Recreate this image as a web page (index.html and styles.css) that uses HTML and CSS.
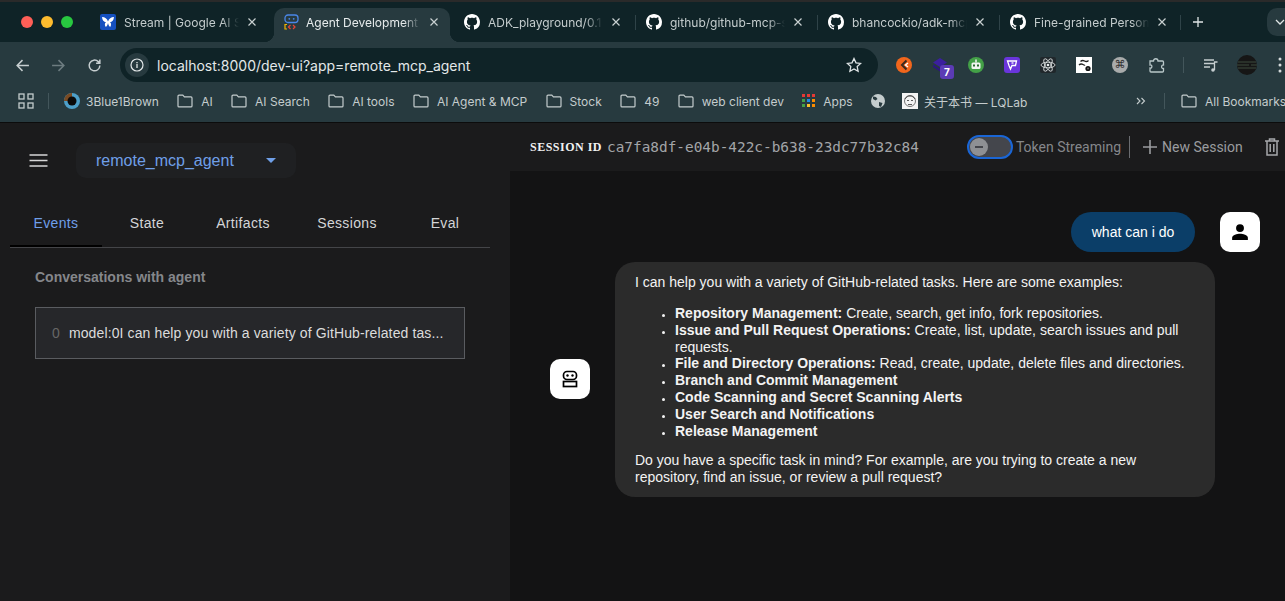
FILE: index.html

```html
<!doctype html>
<html>
<head>
    <title>Agent Development Kit Dev UI</title>
    <link rel="stylesheet" href="styles.css">
    <meta name="viewport" content="width=device-width, initial-scale=1.0">
</head>
<body>
    <svg class="defs" width="0" height="0">
        <symbol id="octo" viewBox="0 0 16 16"><path d="M8 0C3.58 0 0 3.58 0 8c0 3.54 2.29 6.53 5.47 7.59.4.07.55-.17.55-.38 0-.19-.01-.82-.01-1.49-2.01.37-2.53-.49-2.69-.94-.09-.23-.48-.94-.82-1.13-.28-.15-.68-.52-.01-.53.63-.01 1.08.58 1.23.82.72 1.21 1.87.87 2.33.66.07-.52.28-.87.51-1.07-1.78-.2-3.64-.89-3.64-3.95 0-.87.31-1.59.82-2.15-.08-.2-.36-1.02.08-2.12 0 0 .67-.21 2.2.82.64-.18 1.32-.27 2-.27.68 0 1.36.09 2 .27 1.53-1.04 2.2-.82 2.2-.82.44 1.1.16 1.92.08 2.12.51.56.82 1.27.82 2.15 0 3.07-1.87 3.75-3.65 3.95.29.25.54.73.54 1.48 0 1.07-.01 1.93-.01 2.2 0 .21.15.46.55.38A8.013 8.013 0 0016 8c0-4.42-3.58-8-8-8z" fill="#fff"/></symbol>
        <symbol id="folder" viewBox="0 0 16 14"><path d="M1 2.2c0-.6.4-1 1-1h3.8l1.6 1.7H14c.6 0 1 .4 1 1v8c0 .6-.4 1-1 1H2c-.6 0-1-.4-1-1z" fill="none" stroke="#c4cccd" stroke-width="1.2"/></symbol>
        <symbol id="close" viewBox="0 0 10 10"><path d="M1.5 1.5l7 7M8.5 1.5l-7 7" stroke="#c9d1d2" stroke-width="1.2" fill="none"/></symbol>
    </svg>

    <div class="browser">
        <div class="tabstrip">
            <div class="lights">
                <span class="light red"></span>
                <span class="light yellow"></span>
                <span class="light green"></span>
            </div>
            <div class="tab">
                <svg class="fav" viewBox="0 0 16 16"><rect width="16" height="16" rx="2" fill="#1550c0"/><path d="M8 7.500C7 4.500 5 3 2 3c.3 3.500 1.800 5 4 5.300C4.800 9 4.300 11 5.800 13 7 12 7.800 10.500 8 9c.2 1.500 1 3 2.200 4 1.500-2 1-4-.2-4.700 2.200-.3 3.700-1.800 4-5.300-3 0-5 1.500-6 4.500z" fill="#fff"/></svg>
                <span class="tab-title">Stream | Google AI Studio</span>
                <svg class="tab-x" viewBox="0 0 10 10"><use href="#close"/></svg>
            </div>
            <div class="tab active">
                <svg class="fav" viewBox="0 0 16 16"><rect x="1" y="1" width="13" height="7.500" rx="3" fill="none" stroke="#4a86e8" stroke-width="1.300"/><circle cx="5.300" cy="4.800" r=".9" fill="#4a86e8"/><circle cx="9.700" cy="4.800" r=".9" fill="#4a86e8"/><path d="M3 10.500H1v4.500h2" fill="none" stroke="#f4b400" stroke-width="1.200"/><path d="M6.500 11l-2 2 2 2" fill="none" stroke="#ea4335" stroke-width="1.200"/><path d="M9 11l2 2-2 2" fill="none" stroke="#ea4335" stroke-width="1.200"/></svg>
                <span class="tab-title">Agent Development Kit</span>
                <svg class="tab-x" viewBox="0 0 10 10"><use href="#close"/></svg>
            </div>
            <div class="tab">
                <svg class="fav" viewBox="0 0 16 16"><use href="#octo"/></svg>
                <span class="tab-title">ADK_playground/0.1</span>
                <svg class="tab-x" viewBox="0 0 10 10"><use href="#close"/></svg>
            </div>
            <div class="tab sep">
                <svg class="fav" viewBox="0 0 16 16"><use href="#octo"/></svg>
                <span class="tab-title">github/github-mcp-server</span>
                <svg class="tab-x" viewBox="0 0 10 10"><use href="#close"/></svg>
            </div>
            <div class="tab sep">
                <svg class="fav" viewBox="0 0 16 16"><use href="#octo"/></svg>
                <span class="tab-title">bhancockio/adk-mcp-server</span>
                <svg class="tab-x" viewBox="0 0 10 10"><use href="#close"/></svg>
            </div>
            <div class="tab sep">
                <svg class="fav" viewBox="0 0 16 16"><use href="#octo"/></svg>
                <span class="tab-title">Fine-grained Personal access</span>
                <svg class="tab-x" viewBox="0 0 10 10"><use href="#close"/></svg>
            </div>
            <div class="tab-end"></div>
            <svg class="new-tab" viewBox="0 0 12 12"><path d="M6 1v10M1 6h10" stroke="#dfe5e6" stroke-width="1.300" fill="none"/></svg>
            <div class="tab-search"><svg viewBox="0 0 10 6" width="10" height="6"><path d="M1 1l4 4 4-4" stroke="#dfe5e6" stroke-width="1.300" fill="none"/></svg></div>
        </div>

        <div class="toolbar">
            <svg class="nav" viewBox="0 0 14 14"><path d="M13 7H2M7 2L2 7l5 5" stroke="#c6ced0" stroke-width="1.400" fill="none"/></svg>
            <svg class="nav" viewBox="0 0 14 14"><path d="M1 7h11M7 2l5 5-5 5" stroke="#6d7c80" stroke-width="1.400" fill="none"/></svg>
            <svg class="nav" viewBox="0 0 14 14"><path d="M12 7a5 5 0 1 1-1.500-3.600L12 5M12 1.500V5H8.500" stroke="#c6ced0" stroke-width="1.400" fill="none"/></svg>
            <div class="omnibox">
                <span class="info-chip"><svg viewBox="0 0 14 14" width="14" height="14"><circle cx="7" cy="7" r="6" fill="none" stroke="#e3e8e9" stroke-width="1.200"/><path d="M7 6v4M7 4v1.200" stroke="#e3e8e9" stroke-width="1.300"/></svg></span>
                <span class="url">localhost:8000/dev-ui?app=remote_mcp_agent</span>
                <svg class="star" viewBox="0 0 16 16"><path d="M8 1.500l2 4.300 4.700.6-3.500 3.200.9 4.700L8 12l-4.100 2.300.9-4.700-3.500-3.200 4.700-.6z" fill="none" stroke="#dfe5e6" stroke-width="1.300"/></svg>
            </div>
            <div class="extensions">
                <svg class="ext" viewBox="0 0 16 16"><circle cx="8" cy="8" r="8" fill="#f2661c"/><path d="M10.500 3.500L6 8l4.500 4.500" fill="none" stroke="#3a2a20" stroke-width="2"/><path d="M12 6l-2.500 2 2.500 2" fill="none" stroke="#fff" stroke-width="1.400"/></svg>
                <span class="ext-badge-wrap">
                    <svg class="ext" viewBox="0 0 16 16"><path d="M8 1l7 4.500-7 4.500-7-4.500z" fill="#3b1f9e"/><path d="M1 7.500l7 4.500 7-4.500V10l-7 4.500L1 10z" fill="#2c1680"/></svg>
                    <span class="ext-badge">7</span>
                </span>
                <svg class="ext" viewBox="0 0 16 16"><circle cx="8" cy="8" r="8" fill="#43a047"/><rect x="3.500" y="5.500" width="9" height="6.500" rx="1.500" fill="#f1f5f1"/><rect x="5" y="7.500" width="2" height="2" fill="#2b6b30"/><rect x="9" y="7.500" width="2" height="2" fill="#2b6b30"/><path d="M8 5.500V2.500" stroke="#f1f5f1" stroke-width="1.500"/></svg>
                <svg class="ext" viewBox="0 0 16 16"><rect width="16" height="16" rx="3" fill="#6a35dc"/><path d="M3.500 4h9l-1 4.500H8L6.500 12 5 8.500z" fill="none" stroke="#fff" stroke-width="1.300"/><path d="M7.500 6h2" stroke="#fff" stroke-width="1.300"/></svg>
                <svg class="ext" viewBox="0 0 16 16"><rect width="16" height="16" rx="2" fill="#20272b"/><g fill="none" stroke="#e8ecec" stroke-width=".8"><ellipse cx="8" cy="8" rx="7" ry="2.800"/><ellipse cx="8" cy="8" rx="7" ry="2.800" transform="rotate(60 8 8)"/><ellipse cx="8" cy="8" rx="7" ry="2.800" transform="rotate(120 8 8)"/></g><circle cx="8" cy="8" r="1.300" fill="#e8ecec"/></svg>
                <svg class="ext" viewBox="0 0 16 16"><rect width="16" height="16" fill="#fff"/><path d="M4.500 4.500C6 3 7 3 8.500 4s2.500 1 4-.5M3 8c1.500-1.500 2.500-1.500 4-.5S8.500 8.300 9 8" fill="none" stroke="#222" stroke-width="1.400"/><circle cx="12" cy="11.500" r="2.600" fill="#111"/><circle cx="12" cy="11.500" r=".9" fill="#777"/></svg>
                <span class="ext ext-cmd">⌘</span>
                <svg class="ext puzzle" viewBox="0 0 16 16"><path d="M1 4h3.500C4.500 1 9 1 9 4h4.500c.5 0 1 .5 1 1v3c-2.500-.5-2.500 4 0 3.500V14c0 .5-.5 1-1 1H2c-.5 0-1-.5-1-1v-3c2.500.5 2.500-3.500 0-3z" fill="none" stroke="#b9c7c9" stroke-width="1.300"/></svg>
            </div>
            <span class="tool-sep"></span>
            <svg class="ext music" viewBox="0 0 16 16"><path d="M1 3h10M1 6.500h10M1 10h6" stroke="#c6ced0" stroke-width="1.300" fill="none"/><path d="M11.500 13V5h3" stroke="#c6ced0" stroke-width="1.300" fill="none"/><circle cx="10" cy="13" r="1.800" fill="#c6ced0"/></svg>
            <svg class="avatar" viewBox="0 0 20 20"><circle cx="10" cy="10" r="10" fill="#161616"/><path d="M1 7h18M0 10h12M14 10h6M1 13h18" stroke="#3d4a3d" stroke-width="1.100"/></svg>
            <svg class="dots" viewBox="0 0 4 16"><circle cx="2" cy="2" r="1.500" fill="#d4dadb"/><circle cx="2" cy="8" r="1.500" fill="#d4dadb"/><circle cx="2" cy="14" r="1.500" fill="#d4dadb"/></svg>
        </div>

        <div class="bookmarks">
            <svg class="grid-icon" viewBox="0 0 16 16"><g fill="none" stroke="#c4cccd" stroke-width="1.300"><rect x="1" y="1" width="5" height="5"/><rect x="10" y="1" width="5" height="5"/><rect x="1" y="10" width="5" height="5"/><rect x="10" y="10" width="5" height="5"/></g></svg>
            <span class="bm-sep"></span>
            <span class="bm tight"><svg class="bm-icon" viewBox="0 0 16 16"><circle cx="8" cy="8" r="8" fill="#4d9fc9"/><path d="M8 0A8 8 0 0 0 0 8h8z" fill="#7a4a22"/><circle cx="8" cy="8" r="4.500" fill="#0a0a0a"/></svg>3Blue1Brown</span>
            <span class="bm"><svg class="bm-icon" viewBox="0 0 16 14"><use href="#folder"/></svg>AI</span>
            <span class="bm"><svg class="bm-icon" viewBox="0 0 16 14"><use href="#folder"/></svg>AI Search</span>
            <span class="bm"><svg class="bm-icon" viewBox="0 0 16 14"><use href="#folder"/></svg>AI tools</span>
            <span class="bm"><svg class="bm-icon" viewBox="0 0 16 14"><use href="#folder"/></svg>AI Agent &amp; MCP</span>
            <span class="bm"><svg class="bm-icon" viewBox="0 0 16 14"><use href="#folder"/></svg>Stock</span>
            <span class="bm"><svg class="bm-icon" viewBox="0 0 16 14"><use href="#folder"/></svg>49</span>
            <span class="bm"><svg class="bm-icon" viewBox="0 0 16 14"><use href="#folder"/></svg>web client dev</span>
            <span class="bm"><svg class="bm-icon apps" viewBox="0 0 13 14"><g fill="#e53935"><rect width="3" height="3"/><rect x="5" width="3" height="3"/><rect x="10" width="3" height="3"/></g><g fill="#1e88e5"><rect y="5" width="3" height="3" fill="#43a047"/><rect x="5" y="5" width="3" height="3"/><rect x="10" y="5" width="3" height="3" fill="#fb8c00"/></g><g fill="#43a047"><rect y="10" width="3" height="3"/><rect x="5" y="10" width="3" height="3" fill="#fbc02d"/><rect x="10" y="10" width="3" height="3" fill="#fb8c00"/></g></svg>Apps</span>
            <svg class="bm-icon globe" viewBox="0 0 16 16"><circle cx="8" cy="8" r="7" fill="#c4cccd"/><path d="M3 3.500l3 .5 1.500 2-2 1.500L3 6zM9 9l3.500 1-1.500 4-2-1z" fill="#283a3f"/></svg>
            <span class="bm tight"><svg class="bm-icon" viewBox="0 0 16 16"><rect width="16" height="16" fill="#f4f4f4"/><circle cx="8" cy="8" r="5.500" fill="none" stroke="#555" stroke-width=".8"/><path d="M3 6c2-4 8-4 10 0M5 7.500h2M9 7.500h2M6 11.500h4" stroke="#333" stroke-width=".8" fill="none"/></svg><span class="cjk">关于本书 — LQLab</span></span>
            <span class="bm-spacer"></span>
            <svg class="more" viewBox="0 0 10 8"><path d="M1 1l3 3-3 3M5.500 1l3 3-3 3" stroke="#c4cccd" stroke-width="1.100" fill="none"/></svg>
            <span class="bm-sep"></span>
            <span class="bm all"><svg class="bm-icon" viewBox="0 0 16 14"><use href="#folder"/></svg>All Bookmarks</span>
        </div>
    </div>

    <div class="app">
        <aside class="sidebar">
            <div class="side-top">
                <svg class="menu" viewBox="0 0 18 13"><path d="M0 1h18M0 6.500h18M0 12h18" stroke="#d6d6d6" stroke-width="1.500"/></svg>
                <div class="agent-select">
                    <span>remote_mcp_agent</span>
                    <svg class="caret" viewBox="0 0 10 5"><path d="M0 0h10L5 5z" fill="#6f9fe8"/></svg>
                </div>
            </div>
            <div class="side-tabs">
                <span class="side-tab on">Events</span>
                <span class="side-tab">State</span>
                <span class="side-tab">Artifacts</span>
                <span class="side-tab">Sessions</span>
                <span class="side-tab">Eval</span>
            </div>
            <div class="events">
                <div class="events-title">Conversations with agent</div>
                <div class="event-card">
                    <span class="event-num">0</span>
                    <span class="event-text">model:0I can help you with a variety of GitHub-related tas...</span>
                </div>
            </div>
        </aside>

        <main class="chat">
            <header class="chat-head">
                <span class="session-label">SESSION ID</span>
                <span class="session-id">ca7fa8df-e04b-422c-b638-23dc77b32c84</span>
                <span class="toggle"><span class="thumb"></span></span>
                <span class="toggle-label">Token Streaming</span>
                <span class="head-sep"></span>
                <svg class="plus" viewBox="0 0 14 14"><path d="M7 0v14M0 7h14" stroke="#9a9c9f" stroke-width="1.600"/></svg>
                <span class="new-session">New Session</span>
                <svg class="trash" viewBox="0 0 14 18"><path d="M0 3h14M4.500 3V1h5v2M2 3v14h10V3M5.200 6v8M8.800 6v8" fill="none" stroke="#a6a8ab" stroke-width="1.500"/></svg>
            </header>

            <div class="messages">
                <div class="row user">
                    <div class="bubble-user">what can i do</div>
                    <div class="face">
                        <svg viewBox="0 0 16 16" width="18" height="18"><circle cx="8" cy="4.500" r="3.500"/><path d="M1 15v-2c0-2.500 4.500-3.500 7-3.500s7 1 7 3.500v2z"/></svg>
                    </div>
                </div>
                <div class="row bot">
                    <div class="face">
                        <svg viewBox="0 0 18 18" width="18" height="18"><rect x="2.500" y="1.500" width="13" height="8" rx="3.500" fill="none" stroke="#000" stroke-width="1.700"/><circle cx="6.500" cy="5.500" r="1.200"/><circle cx="11.500" cy="5.500" r="1.200"/><rect x="2.500" y="11.500" width="13" height="5" fill="none" stroke="#000" stroke-width="1.700"/></svg>
                    </div>
                    <div class="bubble-bot">
                        <p>I can help you with a variety of GitHub-related tasks. Here are some examples:</p>
                        <ul>
                            <li><b>Repository Management:</b> Create, search, get info, fork repositories.</li>
                            <li><b>Issue and Pull Request Operations:</b> Create, list, update, search issues and pull requests.</li>
                            <li><b>File and Directory Operations:</b> Read, create, update, delete files and directories.</li>
                            <li><b>Branch and Commit Management</b></li>
                            <li><b>Code Scanning and Secret Scanning Alerts</b></li>
                            <li><b>User Search and Notifications</b></li>
                            <li><b>Release Management</b></li>
                        </ul>
                        <p>Do you have a specific task in mind? For example, are you trying to create a new repository, find an issue, or review a pull request?</p>
                    </div>
                </div>
            </div>
        </main>
    </div>
</body>
</html>
```

FILE: styles.css

```css
* {
    box-sizing: border-box;
}
html, body {
    height: 100%;
}
body {
    margin: 0;
    background-color: #131314;
    font-family: "Liberation Sans", Arial, sans-serif;
    overflow: hidden;
    display: flex;
    flex-direction: column;
}
.defs {
    display: block;
    height: 0;
}

/* browser chrome */
.browser {
    border-top: 2px solid #2a2a2a;
    background-color: #0f2327;
    font-family: Inter, "Liberation Sans", sans-serif;
}
.tabstrip {
    height: 40px;
    display: flex;
    align-items: flex-end;
    padding-top: 6px;
    font-size: 12px;
}
.lights {
    width: 92px;
    height: 34px;
    padding: 8px 0 0 21px;
    display: flex;
    gap: 8px;
    flex: none;
}
.light {
    width: 12px;
    height: 12px;
    border-radius: 50%;
}
.red { background-color: #ff5f57; }
.yellow { background-color: #febc2e; }
.green { background-color: #28c840; }

.tab {
    width: 182px;
    height: 34px;
    padding: 0 0 6px 8px;
    display: flex;
    align-items: center;
    color: #c4cccd;
    position: relative;
    flex: none;
}
.tab.active {
    width: 176px;
    margin-right: 6px;
    background-color: #273a3f;
    color: #e6ebec;
    border-radius: 10px 10px 0 0;
    padding-left: 10px;
}
.tab.active .tab-title {
    margin-left: 6px;
}
.tab.active::before, .tab.active::after {
    content: "";
    position: absolute;
    bottom: 0;
    width: 10px;
    height: 10px;
}
.tab.active::before {
    left: -10px;
    background: radial-gradient(circle at 0 0, transparent 10px, #273a3f 10.500px);
}
.tab.active::after {
    right: -10px;
    background: radial-gradient(circle at 100% 0, transparent 10px, #273a3f 10.500px);
}
.tab.sep::before {
    content: "";
    position: absolute;
    left: -3px;
    top: 7px;
    height: 15px;
    width: 1px;
    background-color: #2f4348;
}
.fav {
    width: 16px;
    height: 16px;
    flex: none;
}
.tab-title {
    margin-left: 8px;
    width: 115px;
    flex: none;
    overflow: hidden;
    white-space: nowrap;
    -webkit-mask-image: linear-gradient(to right, #000 85%, transparent);
    mask-image: linear-gradient(to right, #000 85%, transparent);
}
.tab-x {
    width: 10px;
    height: 10px;
    margin-left: 8px;
    flex: none;
}
.tab-end {
    width: 1px;
    height: 15px;
    margin: 0 0 12px -4px;
    background-color: #2f4348;
    flex: none;
}
.new-tab {
    width: 12px;
    height: 12px;
    margin: 0 0 14px 11px;
    flex: none;
}
.tab-search {
    width: 40px;
    height: 28px;
    margin: 0 0 6px 63px;
    border-radius: 10px;
    background-color: #273a3f;
    display: flex;
    align-items: center;
    padding-left: 8px;
    flex: none;
}

.toolbar {
    height: 46px;
    background-color: #273a3f;
    display: flex;
    align-items: center;
    padding: 0 0 0 15px;
}
.nav {
    width: 15px;
    height: 15px;
    margin-right: 21px;
    flex: none;
}
.omnibox {
    width: 758px;
    height: 34px;
    margin-left: -3px;
    border-radius: 17px;
    background-color: #0f2327;
    display: flex;
    align-items: center;
    padding: 0 16px 0 5px;
    flex: none;
}
.info-chip {
    width: 24px;
    height: 24px;
    border-radius: 50%;
    background-color: #273a3f;
    display: flex;
    align-items: center;
    justify-content: center;
}
.url {
    margin-left: 8px;
    color: #e3e8e9;
    font-size: 14px;
    flex: 1;
}
.star {
    width: 16px;
    height: 16px;
}
.extensions {
    display: flex;
    align-items: center;
    gap: 20px;
    margin-left: 18px;
}
.ext {
    width: 16px;
    height: 16px;
    flex: none;
    display: block;
}
.puzzle {
    margin-left: 1px;
}
.ext-badge-wrap {
    position: relative;
    display: block;
}
.ext-badge {
    position: absolute;
    left: 8px;
    top: 8px;
    width: 14px;
    height: 14px;
    border-radius: 3px;
    background-color: #5b3bb5;
    color: #fff;
    font-size: 10px;
    font-weight: bold;
    text-align: center;
    line-height: 14px;
}
.ext-cmd {
    border-radius: 50%;
    background-color: #a9abab;
    color: #333;
    font-size: 11px;
    line-height: 16px;
    text-align: center;
    font-family: "DejaVu Sans", sans-serif;
}
.tool-sep {
    width: 1px;
    height: 16px;
    margin: 0 19px 0 18px;
    background-color: #43565b;
    flex: none;
}
.music {
    margin-right: 18px;
}
.avatar {
    width: 20px;
    height: 20px;
    flex: none;
}
.dots {
    width: 4px;
    height: 16px;
    margin-left: 21px;
    flex: none;
}

.bookmarks {
    height: 35px;
    padding: 0 0 8px 18px;
    background-color: #273a3f;
    border-bottom: 1px solid #0c0c0c;
    display: flex;
    align-items: center;
    font-size: 12px;
    color: #c4cccd;
    white-space: nowrap;
}
.grid-icon {
    width: 16px;
    height: 16px;
    flex: none;
}
.bm-sep {
    width: 1px;
    height: 16px;
    margin: 0 15px 0 14px;
    background-color: #43565b;
    flex: none;
}
.bm {
    display: flex;
    align-items: center;
    gap: 8px;
    margin-right: 18.400px;
    flex: none;
}
.bm.tight {
    gap: 6px;
}
.cjk {
    font-family: Inter, "Noto Sans CJK SC", sans-serif;
}
.bm-icon {
    width: 16px;
    height: 16px;
    flex: none;
}
.apps {
    width: 13px;
}
.globe {
    margin: 0 16px 0 -1px;
}
.bm-spacer {
    flex: 1;
}
.more {
    width: 10px;
    height: 8px;
    margin-right: 4px;
    flex: none;
}
.all {
    width: 104px;
    margin-right: 0;
    margin-left: 1px;
    overflow: hidden;
}

/* dev ui */
.app {
    flex: 1;
    display: flex;
    min-height: 0;
}
.sidebar {
    width: 510px;
    flex: none;
    background-color: #1b1b1c;
}
.side-top {
    display: flex;
    align-items: center;
    padding: 20px 0 0 29px;
}
.menu {
    width: 19px;
    height: 13px;
}
.agent-select {
    width: 220px;
    height: 35px;
    margin-left: 28px;
    padding: 0 20px;
    border-radius: 10px;
    background-color: #1f2022;
    color: #6f9fe8;
    font-size: 16px;
    display: flex;
    align-items: center;
    justify-content: space-between;
}
.caret {
    width: 10px;
    height: 5px;
}
.side-tabs {
    margin: 25px 20px 0 10px;
    display: grid;
    grid-template-columns: 92px 90px 102px 106px 90px;
    border-bottom: 1px solid #444548;
    font-size: 14px;
    letter-spacing: .35px;
}
.side-tab {
    height: 44px;
    line-height: 40px;
    text-align: center;
    color: #d4d5d7;
}
.side-tab.on {
    color: #6f9fe8;
    border-bottom: 2px solid #000;
    margin-bottom: -1px;
}
.events {
    padding: 21px 45px 0 35px;
}
.events-title {
    color: #85878b;
    font-size: 14px;
    font-weight: bold;
    line-height: 16px;
}
.event-card {
    height: 52px;
    margin-top: 22px;
    padding: 0 16px;
    display: flex;
    align-items: center;
    gap: 9px;
    background-color: #26272a;
    border: 1px solid #5a5c60;
    font-size: 14px;
    letter-spacing: .12px;
    color: #dcdcdc;
    white-space: nowrap;
    overflow: hidden;
}
.event-num {
    color: #666;
}

.chat {
    flex: 1;
    min-width: 0;
}
.chat-head {
    height: 48px;
    padding-left: 20px;
    background-color: #1b1b1c;
    display: flex;
    align-items: center;
    white-space: nowrap;
}
.session-label {
    font-family: "Liberation Serif", serif;
    font-size: 12px;
    font-weight: bold;
    letter-spacing: .5px;
    color: #f1f1f1;
}
.session-id {
    margin-left: 5px;
    font-family: "DejaVu Sans Mono", monospace;
    font-size: 14.400px;
    color: #a3a5a8;
}
.toggle {
    width: 46px;
    height: 24px;
    margin-left: 48px;
    border: 2px solid #1a66d6;
    border-radius: 12px;
    background-color: #44464c;
    display: flex;
    align-items: center;
    padding-left: 1px;
    flex: none;
}
.thumb {
    width: 18px;
    height: 18px;
    border-radius: 50%;
    background-color: #8e9094;
    display: flex;
    align-items: center;
    justify-content: center;
}
.thumb::after {
    content: "";
    width: 8px;
    height: 2px;
    background-color: #44464c;
}
.toggle-label {
    margin-left: 3px;
    color: #85878b;
    font-family: Roboto, sans-serif;
    font-size: 14px;
}
.head-sep {
    width: 1px;
    height: 22px;
    margin: 0 13px 0 8px;
    background-color: #6a6c70;
}
.plus {
    width: 14px;
    height: 14px;
    flex: none;
}
.new-session {
    margin-left: 5px;
    color: #9a9c9f;
    font-family: Roboto, sans-serif;
    font-size: 14px;
}
.trash {
    width: 14px;
    height: 18px;
    margin-left: 22px;
    flex: none;
}

.messages {
    padding-top: 41px;
}
.row {
    display: flex;
    gap: 25px;
    margin-bottom: 10px;
}
.row.user {
    justify-content: flex-end;
    padding-right: 25px;
}
.row.bot {
    align-items: center;
    padding-left: 40px;
}
.bubble-user {
    width: 124px;
    height: 40px;
    border-radius: 20px;
    background-color: #0b3e68;
    color: #fff;
    font-size: 14px;
    line-height: 40px;
    text-align: center;
}
.face {
    width: 40px;
    height: 40px;
    border-radius: 10px;
    background-color: #fff;
    display: flex;
    align-items: center;
    justify-content: center;
    flex: none;
}
.bubble-bot {
    width: 600px;
    padding: 12.300px 20px 10.700px;
    border-radius: 20px;
    background-color: #2b2b2b;
    color: #f3f3f3;
    font-size: 14px;
    line-height: 16.800px;
}
.bubble-bot p {
    margin: 0;
}
.bubble-bot ul {
    margin: 14px 0 13px;
    padding-left: 40px;
}
.bubble-bot li::marker {
    font-size: 11px;
}
```
